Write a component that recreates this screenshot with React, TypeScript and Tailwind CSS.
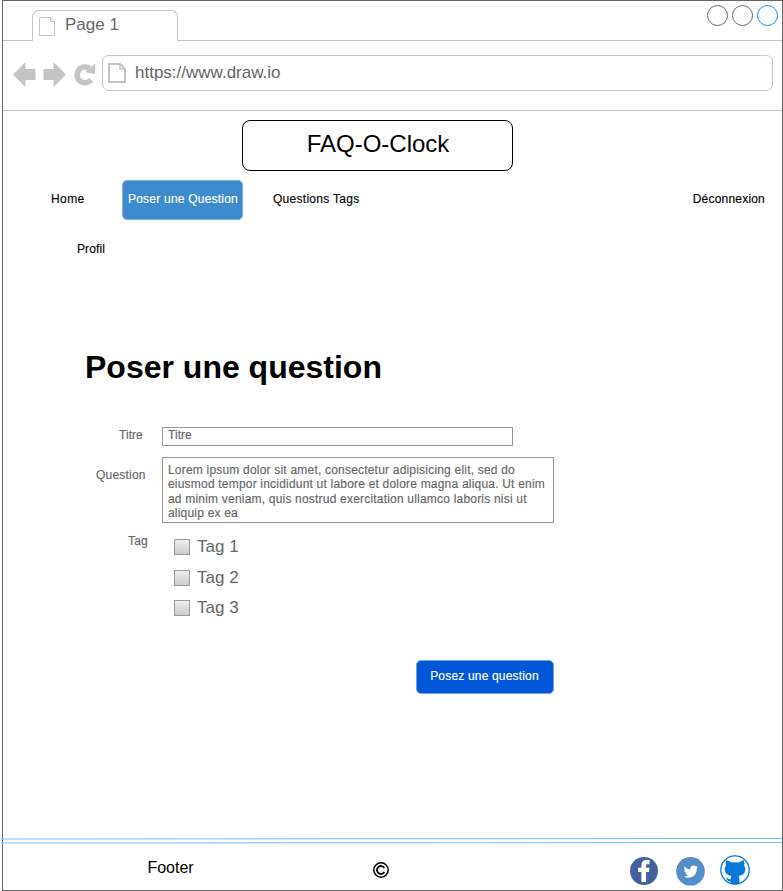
import React from "react";

function PageIcon({ className, thick = false }: { className: string; thick?: boolean }) {
  return (
    <svg className={className} viewBox="0 0 18 20" fill="none" stroke="#c4c4c4" strokeWidth={thick ? 2 : 1}>
      {thick ? (
        <>
          <path d="M1 1H12L17 6V19H1Z" />
          <path d="M12 1V6H17" strokeWidth="1.4" />
        </>
      ) : (
        <path d="M1.5 .5H12.5L16.5 4.5V18.5H1.5ZM12.5 .5V4.5H16.5" />
      )}
    </svg>
  );
}

function TabBar() {
  return (
    <div className="flex h-10 shrink-0 border-b border-[#c4c4c4] pl-[29px]">
      <div className="mt-[9px] flex h-[31px] w-[146px] rounded-t-[7px] border border-b-0 border-[#c4c4c4] bg-white">
        <PageIcon className="mt-[6px] ml-[5px] h-5 w-[18px]" />
        <span className="mt-1 ml-[9px] text-[17px] leading-5 text-[#666666]">Page 1</span>
      </div>
      <div className="mt-1 mr-1 ml-auto flex gap-1">
        <span className="h-[21px] w-[21px] rounded-full border border-[#666666]" />
        <span className="h-[21px] w-[21px] rounded-full border border-[#666666]" />
        <span className="h-[21px] w-[21px] rounded-full border border-[#008cff]" />
      </div>
    </div>
  );
}

function AddressBar() {
  return (
    <div className="flex h-[70px] shrink-0 border-b border-[#c4c4c4] pt-[14px] pl-[9px]">
      <svg className="h-9 w-[90px] shrink-0" viewBox="0 0 90 36" fill="#c4c4c4">
        <path d="M1 19.5 13.5 7V14H23.5V25H13.5V32Z" />
        <path d="M54 19.5 41.5 7V14H31.5V25H41.5V32Z" />
        <path d="M79.2 24.8A7.9 7.9 0 1 1 77.8 13.6" fill="none" stroke="#c4c4c4" strokeWidth="5.6" />
        <path d="M83.2 8.6V19L73 17.2Z" />
      </svg>
      <div className="flex h-9 w-[671px] rounded-[7px] border border-[#c4c4c4]">
        <PageIcon thick className="mt-[7px] ml-[5px] h-5 w-[18px]" />
        <span className="mt-[7px] ml-[9px] text-[17px] leading-5 text-[#666666]">https://www.draw.io</span>
      </div>
    </div>
  );
}

function Navigation() {
  return (
    <nav className="h-[86px] shrink-0 text-xs leading-[14px] tracking-[0.2px] [-webkit-text-stroke:0.15px]">
      <div className="flex h-10">
        <a className="mt-3 ml-12 w-[71px] tracking-[0.4px]">Home</a>
        <a className="h-10 w-[121px] rounded-[5px] border border-[#7fb3df] bg-[#3d8bcd] pt-[11px] pl-px text-center tracking-[0.22px] whitespace-nowrap text-white">
          Poser une Question
        </a>
        <a className="mt-3 ml-[30px] tracking-[0.28px]">Questions Tags</a>
        <a className="mt-3 mr-[17px] ml-auto">Déconnexion</a>
      </div>
      <a className="mt-[22px] ml-[74px] block tracking-[0.1px]">Profil</a>
    </nav>
  );
}

function TagOption({ label }: { label: string }) {
  return (
    <label className="flex h-[30.5px] items-start">
      <span className="mt-[2px] h-4 w-4 border border-[#999999] bg-linear-to-b from-[#eeeeee] to-[#cccccc]" />
      <span className="ml-[7px] text-[17px] leading-5 tracking-normal">{label}</span>
    </label>
  );
}

function QuestionForm() {
  return (
    <form className="flex flex-col text-xs leading-[14px] tracking-[0.2px] text-[#666666]">
      <div className="flex h-[30px] tracking-[0.05px] [-webkit-text-stroke:0.15px]">
        <label className="mt-[1px] ml-[116px] w-[43px]">Titre</label>
        <div className="h-[19px] w-[351px] border border-[#999999] pl-[5px]">Titre</div>
      </div>
      <div className="flex h-[66px] [-webkit-text-stroke:0.15px]">
        <label className="mt-[11px] ml-[93px] w-[66px]">Question</label>
        <div className="w-[392px] border border-[#999999] pt-[5px] pl-[5px] leading-[14.4px] whitespace-nowrap">
          Lorem ipsum dolor sit amet, consectetur adipisicing elit, sed do
          <br />
          eiusmod tempor incididunt ut labore et dolore magna aliqua. Ut enim
          <br />
          ad minim veniam, quis nostrud exercitation ullamco laboris nisi ut
          <br />
          aliquip ex ea
        </div>
      </div>
      <div className="flex h-[137px]">
        <span className="mt-[11px] ml-[125px] w-[46px] [-webkit-text-stroke:0.15px]">Tag</span>
        <div className="flex flex-col pt-[14px]">
          <TagOption label="Tag 1" />
          <TagOption label="Tag 2" />
          <TagOption label="Tag 3" />
        </div>
      </div>
      <button
        type="button"
        className="ml-[413px] flex h-[34px] w-[138px] justify-center rounded-[5px] border border-[#6fa3ea] bg-[#0057d8] pt-2 pr-px tracking-[0.18px] text-white [-webkit-text-stroke:0.15px]"
      >
        Posez une question
      </button>
    </form>
  );
}

function Footer() {
  return (
    <footer className="mt-auto h-[54px] shrink-0">
      <svg className="-ml-[2px] block h-[10px] w-[781px]" viewBox="0 0 781 10" stroke="#7ab8ff" strokeWidth="1">
        <path d="M0 3L781 2.5M0 7L781 6.5" />
      </svg>
      <div className="flex h-11">
        <span className="mt-3 ml-[144.4px] w-[50px] text-base leading-5">Footer</span>
        <svg className="mt-[15px] ml-[174.6px] h-[18px] w-[18px]" viewBox="0 0 18 18" fill="none" stroke="black">
          <circle cx="9" cy="9" r="7.2" strokeWidth="1.5" />
          <path d="M12.4 7A4 4 0 1 0 12.4 11" strokeWidth="1.8" />
        </svg>
        <svg className="mt-[11px] ml-60 h-7 w-7" viewBox="0 0 28 28">
          <circle cx="14" cy="14" r="14" fill="#435f9f" />
          <path
            d="M11.4 25V15H8V10.8H11.4V8.6C11.4 4.9 13.3 3.1 16.6 3.1H19.6V7.2H17.7C16.4 7.2 16 7.8 16 8.9V10.8H19.5L19 15H16V25Z"
            fill="white"
          />
        </svg>
        <svg className="mt-[11px] ml-[18px] h-[29px] w-[29px]" viewBox="0 0 29 29">
          <circle cx="14.5" cy="14.3" r="14.3" fill="#558dca" />
          <path
            d="M8.5 9.5C10.2 11.4 12 12.3 14.4 12.5C13.9 9.7 16 8.4 17.7 8.5C18.7 8.5 19.4 9 19.9 9.5L21.8 8.8L20.6 10.6L22 10.2L20.7 11.7C20.9 17 17 20.7 12.5 20.7C10.7 20.7 9.2 20.2 8 19.4C9.7 19.5 11 19 12 18.2C10.6 18 9.8 17.2 9.4 16.1H10.7C9.2 15.5 8.4 14.6 8.4 13L9.6 13.3C8.2 12.2 7.8 11 8.5 9.5Z"
            fill="white"
          />
        </svg>
        <svg className="mt-[9px] ml-[15.5px] h-[30px] w-[30px]" viewBox="0 0 30 30">
          <circle cx="15" cy="15" r="14.2" fill="white" stroke="#0879d8" strokeWidth="1.3" />
          <path
            d="M6.2 5.3Q9 5.8 11.2 7.6Q15 6.8 18.8 7.6Q21 5.8 23.8 5.3Q24.8 8 24.1 10.4Q25.5 12.2 25.3 14.8Q24.9 20 18.7 21Q19.4 22.2 19.4 24V28.6Q15 30 10.6 28.6V26.4C8.2 26.6 7.4 25.3 6.7 24Q6.1 23 5.4 22.6C7.8 22.2 8 24.9 10.7 24.2Q10.7 22.2 11.3 21Q5.1 20 4.7 14.8Q4.5 12.2 5.9 10.4Q5.2 8 6.2 5.3Z"
            fill="#0879d8"
          />
        </svg>
      </div>
    </footer>
  );
}

export default function App() {
  return (
    <div className="h-[891px] w-[783px] bg-white pl-[2px] font-['Liberation_Sans',Arial,sans-serif] text-black">
      <div className="flex h-full w-[781px] flex-col border border-[#666666]">
        <TabBar />
        <AddressBar />
        <header className="mt-[9px] mb-[9px] ml-[239px] flex h-[51px] w-[271px] shrink-0 justify-center rounded-[8px] border border-black pt-[9px] pl-px text-2xl leading-7">
          FAQ-O-Clock
        </header>
        <Navigation />
        <main className="mt-[83px]">
          <h1 className="mb-[41px] ml-[82px] text-[32px] leading-[37px] font-bold">Poser une question</h1>
          <QuestionForm />
        </main>
        <Footer />
      </div>
    </div>
  );
}
